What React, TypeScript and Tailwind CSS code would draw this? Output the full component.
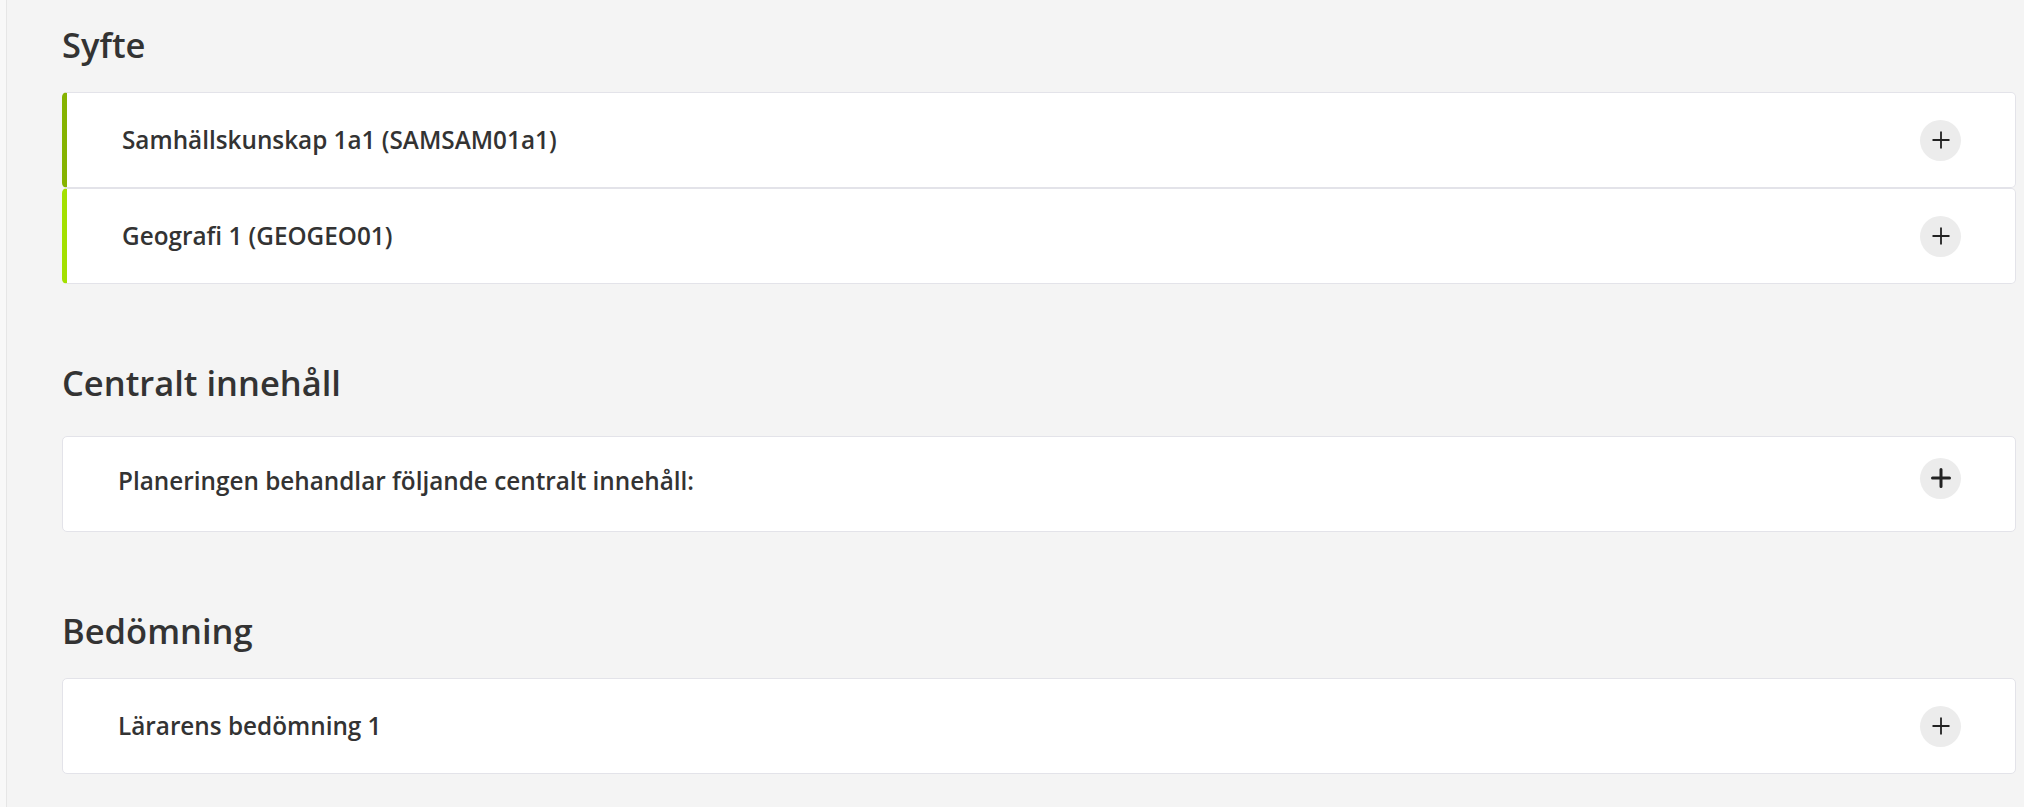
import React from "react";

function PlusButton({ bold = false }: { bold?: boolean }) {
  return (
    <span
      className={
        "flex h-[41px] w-[41px] shrink-0 items-center justify-center rounded-full bg-[#ececec] " +
        (bold ? "mb-[6px]" : "")
      }
    >
      <svg width="20" height="20" viewBox="0 0 20 20" aria-hidden="true">
        <path
          d="M10 1.5V18.5M1.5 10H18.5"
          stroke="#222"
          strokeWidth={bold ? 3 : 1.8}
          strokeLinecap={bold ? "round" : "butt"}
          fill="none"
        />
      </svg>
    </span>
  );
}

type Item = { label: string; accent?: string; bold?: boolean };

function Card({ item }: { item: Item }) {
  return (
    <div
      className={
        "flex h-[96px] items-center justify-between rounded-[5px] border border-[#e3e3e9] bg-white pr-[54px] " +
        (item.accent ? "border-l-[5px] pl-[55px] " : "pl-[55px] ") +
        (item.bold ? "pb-[6px]" : "")
      }
      style={item.accent ? { borderLeftColor: item.accent } : undefined}
    >
      <span className="text-[24.3px] font-semibold text-[#333333]">{item.label}</span>
      <PlusButton bold={item.bold} />
    </div>
  );
}

function Section({
  title,
  items,
  first = false,
  extra = false,
}: {
  title: string;
  items: Item[];
  first?: boolean;
  extra?: boolean;
}) {
  return (
    <section className={first ? "" : "mt-[78px]"}>
      <h2 className="text-[34.5px] leading-[42px] font-semibold text-[#333333]">{title}</h2>
      <div className={"flex flex-col " + (extra ? "mt-[32px]" : "mt-[26px]")}>
        {items.map((it) => (
          <Card key={it.label} item={it} />
        ))}
      </div>
    </section>
  );
}

export default function App() {
  return (
    <div
      className="flex min-h-screen bg-[#f4f4f4]"
      style={{ fontFamily: '"Open Sans", "Noto Sans", sans-serif' }}
    >
      <div className="w-[7px] shrink-0 border-r border-[#e6e6e6] bg-[#f8f8f8]" />
      <main className="flex-1 pt-[24px] pr-[8px] pl-[55px]">
        <Section
          first
          title="Syfte"
          items={[
            { label: "Samhällskunskap 1a1 (SAMSAM01a1)", accent: "#86b300" },
            { label: "Geografi 1 (GEOGEO01)", accent: "#a3e000" },
          ]}
        />
        <Section
          extra
          title="Centralt innehåll"
          items={[{ label: "Planeringen behandlar följande centralt innehåll:", bold: true }]}
        />
        <Section title="Bedömning" items={[{ label: "Lärarens bedömning 1" }]} />
      </main>
    </div>
  );
}
